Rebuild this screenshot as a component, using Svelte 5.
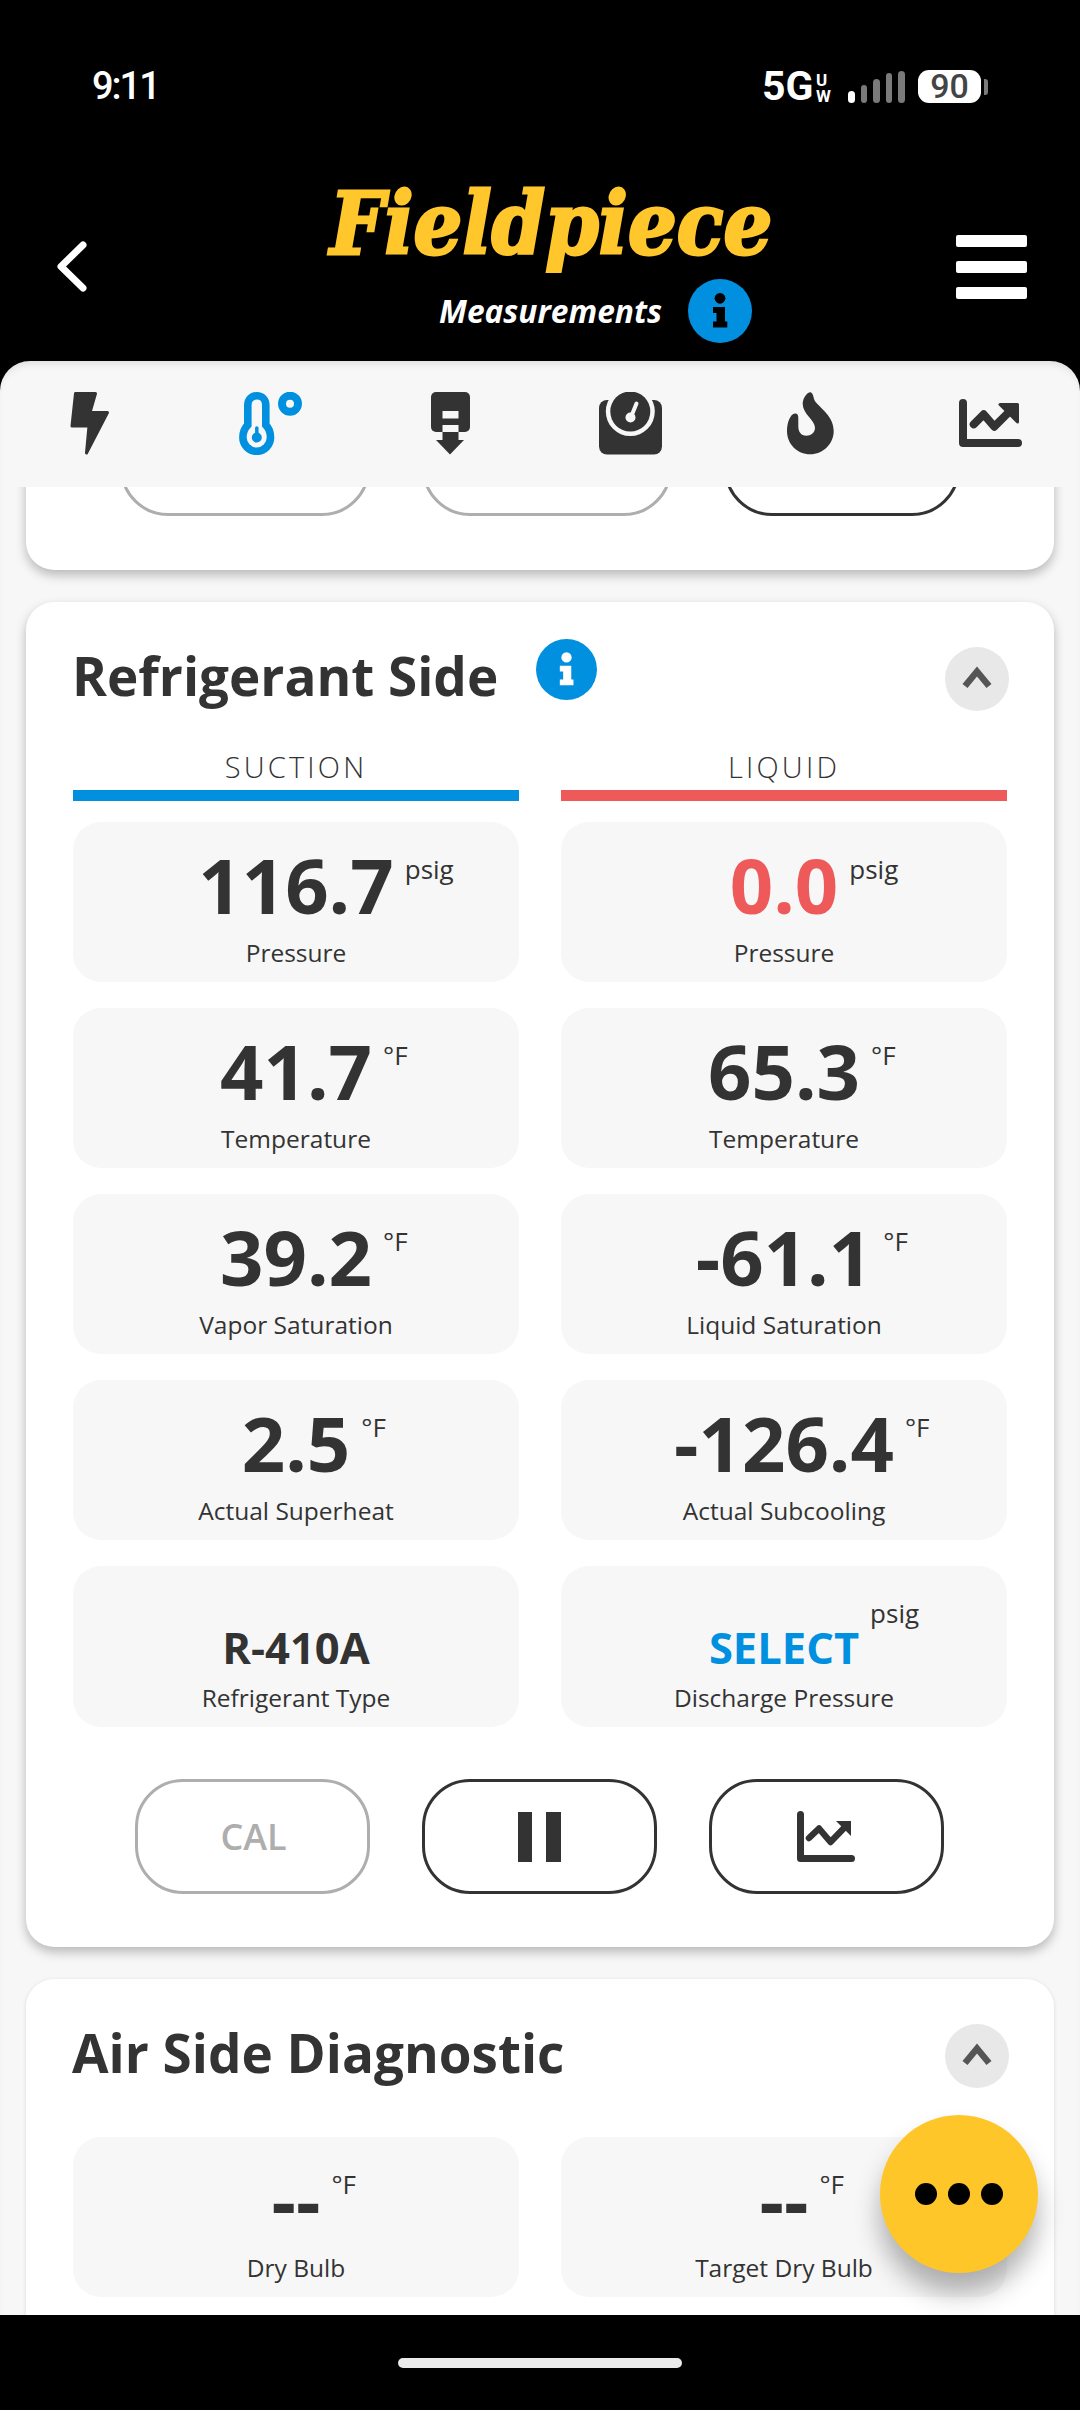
<script>
    const suction = [
        { value: '116.7', unit: 'psig', label: 'Pressure' },
        { value: '41.7', unit: '°F', label: 'Temperature' },
        { value: '39.2', unit: '°F', label: 'Vapor Saturation' },
        { value: '2.5', unit: '°F', label: 'Actual Superheat' },
        { value: 'R-410A', label: 'Refrigerant Type', small: true }
    ];
    const liquid = [
        { value: '0.0', unit: 'psig', label: 'Pressure', color: 'red' },
        { value: '65.3', unit: '°F', label: 'Temperature' },
        { value: '-61.1', unit: '°F', label: 'Liquid Saturation' },
        { value: '-126.4', unit: '°F', label: 'Actual Subcooling' },
        { value: 'SELECT', unit: 'psig', label: 'Discharge Pressure', small: true, color: 'blue' }
    ];
    const air = [
        { value: '--', unit: '°F', label: 'Dry Bulb' },
        { value: '--', unit: '°F', label: 'Target Dry Bulb' }
    ];
    const bars = [
        { h: 12, on: true },
        { h: 18 },
        { h: 24 },
        { h: 30 },
        { h: 32 }
    ];
</script>

{#snippet info(cls)}
    <svg class="info {cls}" viewBox="-32 -32 64 64">
        <circle r="32" fill="#0090df" />
        <circle cy="-12.7" r="5.4" class="glyph" />
        <path class="glyph" d="M-7-4H5V10.5H7.3V16.5H-7V10.5H-3.5V2H-7Z" />
    </svg>
{/snippet}

{#snippet collapse()}
    <button class="collapse" aria-label="Collapse">
        <svg viewBox="0 0 64 64" width="64" height="64">
            <path d="M20 39 32 24.5 44 39" fill="none" stroke="#555" stroke-width="6.5" />
        </svg>
    </button>
{/snippet}

{#snippet tile(t)}
    <div class="tile {t.small ? 'tall' : ''}">
        <div class="value {t.small ? 'small' : ''}">
            <span class="num {t.color || ''}">{t.value}{#if t.unit}<span class="unit">{t.unit}</span>{/if}</span>
        </div>
        <div class="label">{t.label}</div>
    </div>
{/snippet}

<div class="phone">
    <div class="status">
        <span class="time">9:11</span>
        <div class="status-right">
            <span class="net">5G</span>
            <span class="uw"><span>U</span><span>W</span></span>
            <div class="signal">
                {#each bars as b}
                    <i class={b.on ? 'on' : ''} style="height: {b.h}px"></i>
                {/each}
            </div>
            <div class="battery"><span>90</span></div>
            <i class="nub"></i>
        </div>
    </div>

    <header>
        <svg class="back" viewBox="0 0 34 52" width="34" height="52">
            <path d="M28 4 6 25.5 28 47" fill="none" stroke="#fff" stroke-width="7" stroke-linecap="round" stroke-linejoin="round" />
        </svg>
        <div class="brand">
            <div class="logo">Fieldpiece</div>
            <div class="sub">
                <span>Measurements</span>
                {@render info('on-dark')}
            </div>
        </div>
        <div class="burger"><i></i><i></i><i></i></div>
    </header>

    <div class="sheet">
        <nav class="tabs">
            <svg viewBox="69 392 40 63" width="40" height="63">
                <path fill="#333" stroke="#333" stroke-width="3" stroke-linejoin="round" d="M74.5 393.5H94.5L89 412.5H106.5L85.5 453 88 426H71Z" />
            </svg>
            <svg viewBox="238 392 63 63" width="63" height="63">
                <path fill="none" stroke="#0090df" stroke-width="7.6" d="M246.8 425V405C246.8 399.5 250.5 395.8 255.8 395.8S264.8 399.5 264.8 405V425C267.8 428 269.5 432 269.5 437.5A13.8 13.8 0 0 1 241.9 437.5C241.9 432 243.8 428 246.8 425Z" />
                <circle cx="255.8" cy="437.5" r="5" fill="#0090df" />
                <path d="M255.8 428V436" stroke="#0090df" stroke-width="3.5" stroke-linecap="round" />
                <circle cx="289" cy="403.7" r="8" fill="none" stroke="#0090df" stroke-width="8" />
            </svg>
            <svg viewBox="430 392 39 63" width="39" height="63">
                <rect x="430" y="392" width="39" height="40" rx="5" fill="#333" />
                <rect x="441.5" y="411" width="16" height="7.5" fill="#f7f7f7" />
                <rect x="441.5" y="425" width="16" height="7.5" fill="#f7f7f7" />
                <rect x="441.5" y="432" width="16" height="9" fill="#333" />
                <path d="M435 440H463L449 454.5Z" fill="#333" />
            </svg>
            <svg viewBox="598 392 63 63" width="63" height="63">
                <rect x="598" y="400" width="63" height="54.5" rx="8" fill="#333" />
                <circle cx="629.3" cy="411.5" r="24.5" fill="#f7f7f7" />
                <circle cx="629.3" cy="411.5" r="20" fill="#333" />
                <path d="M630 417 635.5 403.5" stroke="#f7f7f7" stroke-width="4" stroke-linecap="round" />
                <circle cx="629.5" cy="417.5" r="5" fill="#f7f7f7" />
            </svg>
            <svg viewBox="786 392 47 63" width="47" height="63">
                <path fill="#333" d="M809.3 392.3C811 392 812.5 396 813 399 815 406 832.7 414 832.7 431 832.7 444 822 454.3 809.3 454.3 796 454.3 786 444 786 431 786 423 789 414 794 413.5 796.5 413.3 797.3 415 797.3 418V426C797.3 432 800 435.7 805.3 435.7 810 435.7 814 432.5 814 428 814 420 801.7 414 801.7 404 801.7 398 806 392.5 809.3 392.3Z" />
            </svg>
            <svg viewBox="958 392 63 63" width="63" height="63">
                <path d="M962 403V443H1017" fill="none" stroke="#333" stroke-width="8" stroke-linecap="round" stroke-linejoin="round" />
                <path d="M972.7 424.3 982.7 414.3 993.3 426.7 1009 411" fill="none" stroke="#333" stroke-width="8" stroke-linecap="round" stroke-linejoin="round" />
                <path d="M999 404.5H1016.5V422Z" fill="#333" stroke="#333" stroke-width="3" stroke-linejoin="round" />
            </svg>
        </nav>

        <div class="scroll">
            <section class="card cut">
                <div class="ghost grey w1"></div>
                <div class="ghost grey w1"></div>
                <div class="ghost w2"></div>
            </section>

            <section class="card">
                <div class="card-head">
                    <h2>Refrigerant Side</h2>
                    {@render info('on-light')}
                    {@render collapse()}
                </div>
                <div class="cols">
                    <div class="col">
                        <div class="col-title">SUCTION</div>
                        <div class="rule blue-bg"></div>
                        {#each suction as t}
                            {@render tile(t)}
                        {/each}
                    </div>
                    <div class="col">
                        <div class="col-title">LIQUID</div>
                        <div class="rule red-bg"></div>
                        {#each liquid as t}
                            {@render tile(t)}
                        {/each}
                    </div>
                </div>
                <div class="actions">
                    <button class="pill off">CAL</button>
                    <button class="pill" aria-label="Pause"><span class="pause"><i></i><i></i></span></button>
                    <button class="pill" aria-label="Chart">
                        <svg viewBox="797 1811 58 51" width="58" height="51">
                            <path d="M800.5 1814.5V1858.5H851.5" fill="none" stroke="#333" stroke-width="7" stroke-linecap="round" stroke-linejoin="round" />
                            <path d="M809 1838 819 1828.5 830.5 1842 846 1826" fill="none" stroke="#333" stroke-width="6.5" stroke-linejoin="round" stroke-linecap="round" />
                            <path d="M836 1821H851V1836Z" fill="#333" />
                        </svg>
                    </button>
                </div>
            </section>

            <section class="card last">
                <div class="card-head">
                    <h2>Air Side Diagnostic</h2>
                    {@render collapse()}
                </div>
                <div class="cols air">
                    {#each air as t}
                        {@render tile(t)}
                    {/each}
                </div>
            </section>
        </div>
    </div>

    <div class="home"><i></i></div>

    <button class="fab" aria-label="More"><i></i><i></i><i></i></button>
</div>

<style>
    :global(body) {
        margin: 0;
        background: #000;
    }
    .phone {
        position: relative;
        width: 1080px;
        height: 2410px;
        background: #000;
        display: flex;
        flex-direction: column;
        overflow: hidden;
        font-family: "Open Sans", sans-serif;
        color: #333;
    }
    i {
        display: block;
    }
    button {
        padding: 0;
        margin: 0;
        font-family: inherit;
    }

    .status {
        height: 140px;
        box-sizing: border-box;
        padding: 64px 92px 0 92px;
        display: flex;
        justify-content: space-between;
        align-items: flex-start;
        color: #fff;
    }
    .time {
        font-family: Roboto, sans-serif;
        font-weight: 500;
        font-size: 38px;
        line-height: 44px;
        letter-spacing: -2px;
    }
    .status-right {
        display: flex;
        align-items: flex-start;
        margin-top: 6px;
    }
    .net {
        font-family: Roboto, sans-serif;
        font-weight: 700;
        font-size: 41px;
        line-height: 33px;
        width: 54px;
    }
    .uw {
        display: flex;
        flex-direction: column;
        width: 32px;
        font-family: Roboto, sans-serif;
        font-weight: 700;
        font-size: 17px;
        line-height: 16px;
        padding-top: 2px;
    }
    .signal {
        display: flex;
        align-items: flex-end;
        gap: 6px;
        height: 33px;
        width: 70px;
    }
    .signal i {
        width: 6.5px;
        border-radius: 4px;
        background: #7a7a7a;
    }
    .signal i.on {
        background: #fff;
    }
    .battery {
        width: 63px;
        height: 33px;
        background: #fff;
        border-radius: 11px;
        color: #444;
        font-family: Roboto, sans-serif;
        font-weight: 500;
        font-size: 34px;
        line-height: 33px;
        text-align: center;
    }
    .nub {
        width: 4px;
        height: 16px;
        margin: 9px 0 0 3px;
        background: #7a7a7a;
        border-radius: 0 3px 3px 0;
    }

    header {
        height: 221px;
        display: grid;
        grid-template-columns: 330px 441px 1fr;
        align-items: start;
    }
    .back {
        margin: 101px 0 0 55px;
    }
    .brand {
        padding-top: 39px;
    }
    .logo {
        font-family: "DejaVu Serif", serif;
        font-weight: 700;
        font-style: italic;
        font-size: 86px;
        line-height: 90px;
        color: #ffc72c;
        -webkit-text-stroke: 3px #ffc72c;
        white-space: nowrap;
        transform-origin: left center;
        transform: scaleX(0.892);
    }
    .sub {
        display: flex;
        align-items: center;
        gap: 26px;
        margin: 10px 0 0 109px;
        color: #fff;
        font-weight: 700;
        font-style: italic;
        font-size: 31.7px;
        line-height: 64px;
    }
    .info {
        display: block;
        flex: none;
    }
    .on-dark {
        width: 64px;
        height: 64px;
    }
    .on-dark .glyph {
        fill: #000;
    }
    .on-light {
        width: 61px;
        height: 61px;
        margin: 0 0 18px 38px;
    }
    .on-light .glyph {
        fill: #fff;
    }
    .burger {
        display: flex;
        flex-direction: column;
        gap: 14px;
        margin: 95px 0 0 185px;
        width: 71px;
    }
    .burger i {
        height: 12px;
        background: #fff;
        border-radius: 2px;
    }

    .sheet {
        flex: 1;
        min-height: 0;
        display: flex;
        flex-direction: column;
        background: #f7f7f7;
        border-radius: 30px 30px 0 0;
        box-shadow: inset 0 7px 8px -5px rgba(0, 0, 0, 0.12);
    }
    .tabs {
        height: 126px;
        flex: none;
        box-sizing: border-box;
        padding-top: 31px;
        display: grid;
        grid-template-columns: repeat(6, 1fr);
        justify-items: center;
        align-items: start;
    }
    .tabs svg {
        display: block;
    }
    .scroll {
        flex: 1;
        min-height: 0;
        overflow: hidden;
        padding: 0 26px;
    }
    .card {
        background: #fff;
        border-radius: 28px;
        box-shadow: 0 5px 11px rgba(0, 0, 0, 0.26);
        padding: 45px 47px 53px;
        margin-bottom: 32px;
    }
    .card.cut {
        height: 123px;
        box-sizing: border-box;
        margin-top: -40px;
        padding: 0 0 54px 94px;
        display: flex;
        align-items: flex-end;
        gap: 52px;
    }
    .ghost {
        flex: none;
        box-sizing: border-box;
        height: 115px;
        border: 3px solid #333;
        border-radius: 48px;
    }
    .ghost.grey {
        border-color: #aeaeae;
    }
    .w1 {
        width: 250px;
    }
    .w2 {
        width: 236px;
    }
    .card.last {
        margin-bottom: 0;
        box-shadow: 0 1px 4px rgba(0, 0, 0, 0.12);
        min-height: 500px;
    }
    .card-head {
        display: flex;
        align-items: center;
        height: 63px;
    }
    h2 {
        margin: 0 0 0 -1px;
        padding-bottom: 5px;
        font-size: 53px;
        line-height: 58px;
        font-weight: 700;
        color: #333;
    }
    .collapse {
        margin: 0 -2px 0 auto;
        width: 64px;
        height: 64px;
        border: none;
        border-radius: 50%;
        background: #e8e8e8;
    }
    .collapse svg {
        display: block;
    }

    .cols {
        display: grid;
        grid-template-columns: 446px 446px;
        gap: 26px 42px;
        margin-top: 39px;
    }
    .cols.air {
        margin-top: 50px;
    }
    .col {
        display: flex;
        flex-direction: column;
        gap: 26px;
    }
    .col-title {
        font-size: 29px;
        font-weight: 300;
        line-height: 34px;
        letter-spacing: 3.2px;
        text-align: center;
        color: #333;
        padding-top: 1px;
        margin-bottom: -20px;
    }
    .rule {
        height: 11px;
        margin-bottom: -5px;
    }
    .blue-bg {
        background: #0090df;
    }
    .red-bg {
        background: #ee5a5a;
    }
    .tile {
        background: #f7f7f7;
        border-radius: 28px;
        height: 160px;
        box-sizing: border-box;
        padding-top: 26px;
        text-align: center;
    }
    .tile.tall {
        height: 161px;
    }
    .value {
        font-size: 76px;
        line-height: 74px;
        font-weight: 700;
        margin-bottom: 16px;
    }
    .value.small {
        font-size: 43.5px;
        line-height: 42px;
        margin: 35px 0 14px;
    }
    .num {
        position: relative;
        display: inline-block;
    }
    .num.red {
        color: #ee5a5a;
    }
    .num.blue {
        color: #0090df;
    }
    .unit {
        position: absolute;
        left: calc(100% + 11px);
        top: 8px;
        font-size: 26px;
        line-height: 26px;
        font-weight: 400;
        color: #333;
    }
    .small .unit {
        top: -27px;
    }
    .label {
        font-size: 24.5px;
        line-height: 30px;
        font-weight: 500;
    }

    .actions {
        display: flex;
        justify-content: center;
        gap: 52px;
        margin-top: 52px;
        padding-right: 2px;
    }
    .pill {
        box-sizing: border-box;
        width: 235px;
        height: 115px;
        border: 3px solid #333;
        border-radius: 48px;
        background: #fff;
        display: flex;
        align-items: center;
        justify-content: center;
    }
    .pill.off {
        border-color: #aeaeae;
        color: #aeaeae;
        font-size: 36px;
        font-weight: 600;
        padding-left: 3px;
    }
    .pause {
        display: flex;
        gap: 14px;
    }
    .pause i {
        width: 14.5px;
        height: 50px;
        background: #333;
    }

    .home {
        height: 95px;
        flex: none;
        background: #000;
        display: flex;
        justify-content: center;
        padding-top: 43px;
        box-sizing: border-box;
        position: relative;
    }
    .home i {
        width: 284px;
        height: 10px;
        border-radius: 5px;
        background: #ebebeb;
    }

    .fab {
        position: absolute;
        left: 880px;
        top: 2115px;
        width: 158px;
        height: 158px;
        border: none;
        border-radius: 50%;
        background: #ffc629;
        box-shadow: 0 20px 26px rgba(0, 0, 0, 0.3);
        display: flex;
        align-items: center;
        justify-content: center;
        gap: 11px;
    }
    .fab i {
        width: 22px;
        height: 22px;
        border-radius: 50%;
        background: #000;
    }
</style>
